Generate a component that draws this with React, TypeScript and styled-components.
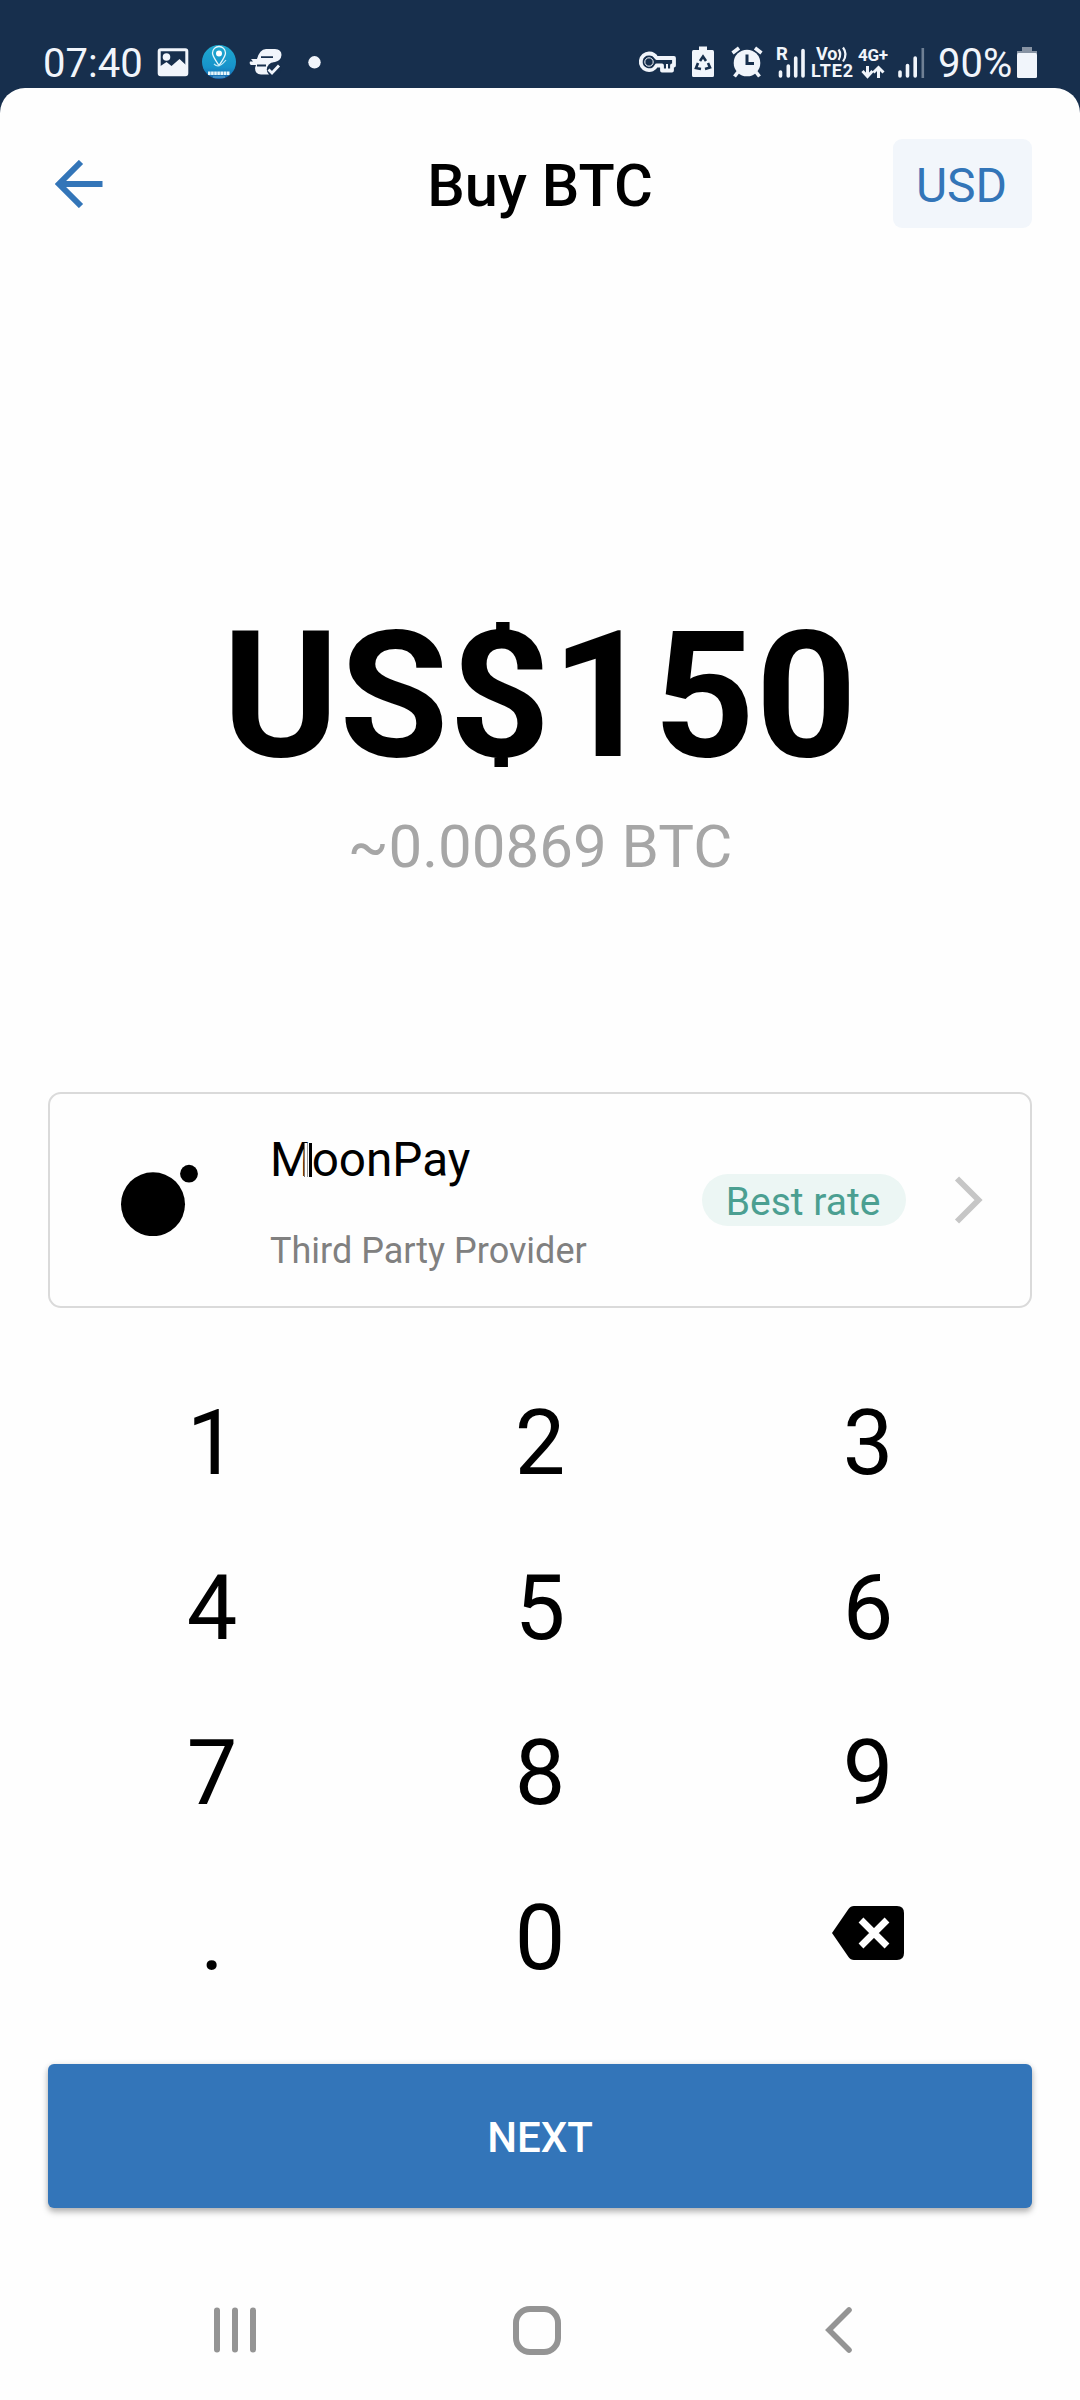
import React from "react";
import styled, { createGlobalStyle } from "styled-components";

const GlobalStyle = createGlobalStyle`
  * { box-sizing: border-box; }
  body { margin: 0; background: #172f4d; }
  button { border: 0; padding: 0; margin: 0; background: none; font: inherit; color: inherit; }
  svg { display: block; flex: none; }
`;

const Screen = styled.div`
  width: 1080px;
  height: 2400px;
  overflow: hidden;
  display: flex;
  flex-direction: column;
  background: #172f4d;
  font-family: Roboto, "Noto Sans", sans-serif;
  color: #000;
`;

const StatusBar = styled.div`
  height: 88px;
  flex: none;
  padding: 40px 43px 8px 42px;
  display: flex;
  justify-content: space-between;
  color: #f1f5fb;
`;

const StatusGroup = styled.div`
  display: flex;
  align-items: flex-start;
`;

const StatusText = styled.span<{ $width: number; $lead: number }>`
  width: ${(p) => p.$width}px;
  padding: 4px 0 0 ${(p) => p.$lead}px;
  font-size: 40px;
  line-height: 40px;
  white-space: nowrap;
`;

const StatusIcon = styled.svg<{ $gap: number }>`
  height: 40px;
  margin-left: ${(p) => p.$gap}px;
  overflow: visible;
`;

const Sheet = styled.main`
  flex: 1;
  display: flex;
  flex-direction: column;
  padding: 51px 48px 0;
  background: #fefefe;
  border-radius: 25px 25px 0 0;
`;

const Header = styled.header`
  height: 89px;
  display: grid;
  grid-template-columns: 139px 1fr 139px;
  align-items: center;
`;

const BackButton = styled.button`
  padding-left: 7px;
  justify-self: start;
`;

const Title = styled.h1`
  margin: 0;
  padding-top: 6px;
  text-align: center;
  font-size: 59.5px;
  line-height: 83px;
  font-weight: 500;
`;

const CurrencyButton = styled.button`
  height: 89px;
  padding: 4px 2px 0 0;
  border-radius: 9px;
  background: #f2f6fb;
  color: #3375b8;
  font-size: 48px;
  line-height: 85px;
`;

const Amount = styled.div`
  margin-top: 368px;
  text-align: center;
  font-size: 177px;
  line-height: 200px;
  font-weight: 700;
  letter-spacing: 0.6px;
  clip-path: inset(26px 0 29px 0);
`;

const Estimate = styled.div`
  margin-top: 11px;
  text-align: center;
  font-size: 60px;
  line-height: 80px;
  color: #a6a6a6;
`;

const ProviderCard = styled.section`
  margin-top: 205px;
  height: 216px;
  padding: 0 47px 0 71px;
  display: flex;
  align-items: center;
  border: 2px solid #dadada;
  border-radius: 13px;
`;

const ProviderInfo = styled.div`
  flex: 1;
  margin-left: 71px;
  padding-top: 11px;
  display: flex;
  flex-direction: column;
  gap: 31px;
`;

const ProviderName = styled.div`
  position: relative;
  font-size: 47.7px;
  line-height: 60px;
`;

const TextCaret = styled.span`
  position: absolute;
  left: 34px;
  top: 13px;
  width: 8px;
  height: 34px;
  background: #fefefe;
  border-left: 1px solid #777;
  border-right: 3px solid #000;
  box-shadow: inset -1px 0 #fff, inset -2px 0 #999;
`;

const ProviderNote = styled.div`
  font-size: 36px;
  line-height: 60px;
  color: #808080;
`;

const RateBadge = styled.span`
  width: 204px;
  height: 52px;
  padding: 4px 2px 0 0;
  border-radius: 26px;
  background: #ecf6f4;
  color: #4b9f91;
  text-align: center;
  font-size: 39px;
  line-height: 49px;
`;

const Chevron = styled.svg`
  margin-left: 47px;
`;

const Keypad = styled.div`
  margin-top: 53px;
  display: grid;
  grid-template-columns: repeat(3, 1fr);
  grid-auto-rows: 165px;
`;

const Key = styled.button`
  display: flex;
  align-items: center;
  justify-content: center;
  font-size: 90px;
  line-height: 165px;
`;

const DeleteKey = styled(Key)`
  padding-bottom: 11px;
`;

const NextButton = styled.button`
  margin-top: 43px;
  height: 144px;
  padding-top: 2px;
  border-radius: 6px;
  background: #3375b9;
  color: #fff;
  font-size: 42px;
  font-weight: 500;
  box-shadow: 0 4px 6px rgba(0, 0, 0, 0.26), 0 1px 6px rgba(0, 0, 0, 0.1);
`;

const NavBar = styled.nav`
  margin-top: 95px;
  height: 54px;
  padding: 0 180px 0 164px;
  display: flex;
  align-items: center;
  justify-content: space-between;
`;

const NavButton = styled.button`
  color: #949494;
`;

const HomeButton = styled(NavButton)`
  padding-right: 9px;
`;

const KEYS = ["1", "2", "3", "4", "5", "6", "7", "8", "9", ".", "0"];

const BackspaceIcon = () => (
  <svg width="72" height="54" viewBox="0 0 72 54">
    <path
      d="M22 0H65Q72 0 72 7V47Q72 54 65 54H22Q18.500 54 16.500 51L0 27L16.500 3Q18.500 0 22 0Z"
      fill="#000"
    />
    <path d="M29 14L55 40M55 14L29 40" stroke="#fff" strokeWidth="6.800" />
  </svg>
);

const LeftStatus = () => (
  <StatusGroup>
    <StatusText $width={100} $lead={1}>07:40</StatusText>
    <StatusIcon $gap={15} width="32" viewBox="0 0 32 40">
      <rect x="2.200" y="9.700" width="27.600" height="25" rx="1.500" fill="none" stroke="currentColor" strokeWidth="3" />
      <circle cx="9.500" cy="17" r="3.800" fill="currentColor" />
      <path d="M2 27L9.500 22L14.500 26L22.500 19L30 26V35H2Z" fill="currentColor" />
    </StatusIcon>
    <StatusIcon $gap={13} width="34" viewBox="0 0 34 40">
      <defs>
        <linearGradient id="app" x1="0" y1="0" x2="0" y2="1">
          <stop offset="0" stopColor="#1fa9cf" />
          <stop offset=".65" stopColor="#1793cb" />
          <stop offset="1" stopColor="#1663ae" />
        </linearGradient>
      </defs>
      <circle cx="17" cy="22" r="17" fill="url(#app)" />
      <path d="M17 25.500C13 19 10.500 16.500 10.500 13A6.500 6.500 0 0 1 23.500 13C23.500 16.500 21 19 17 25.500Z" fill="none" stroke="#e8f7fc" strokeWidth="1.300" />
      <circle cx="17" cy="13.500" r="3" fill="#fff" />
      <path d="M12 24Q17 29 24 20" fill="none" stroke="#bfe8f5" strokeWidth="1.200" />
      <path d="M6 33.300H28" stroke="#e8f7fc" strokeWidth="3.400" strokeDasharray="2.600 .5" />
      <path d="M11 37H23" stroke="#7fc0e0" strokeWidth=".8" />
    </StatusIcon>
    <StatusIcon $gap={13} width="34" viewBox="0 0 34 40">
      <path d="M17 9H26Q32.500 9.500 32.500 15Q32 20.500 26 22L22 24V34.500H12Q6 34 6 28L7 25H2Q0 24 1 21.500H4L2 19H8Q10.500 9.500 17 9Z" fill="currentColor" />
      <path d="M12 17.200H24M8 25.500H17" stroke="#172f4d" strokeWidth="1.800" />
      <circle cx="25" cy="29.500" r="7.200" fill="#172f4d" />
      <path d="M19.500 29.500L23 33L30 25.500" fill="none" stroke="currentColor" strokeWidth="2.800" />
    </StatusIcon>
    <StatusIcon $gap={25} width="13" viewBox="0 0 13 40">
      <circle cx="6.500" cy="22.300" r="6.200" fill="currentColor" />
    </StatusIcon>
  </StatusGroup>
);

const RightStatus = () => (
  <StatusGroup>
    <StatusIcon $gap={0} width="37" viewBox="0 0 37 40">
      <path
        d="M10 13.500A8.300 8.300 0 1 0 17.500 25.500H23V30.500H33V25.500H35V18H17.500A8.300 8.300 0 0 0 10 13.500Z"
        fill="none" stroke="currentColor" strokeWidth="3.800" strokeLinejoin="round"
      />
      <circle cx="10" cy="22" r="4.200" fill="none" stroke="currentColor" strokeWidth="1" />
      <path d="M28 24V30" stroke="currentColor" strokeWidth="2" />
    </StatusIcon>
    <StatusIcon $gap={16} width="22" viewBox="0 0 22 40">
      <path d="M7 6.500H15V10H20.500Q22 10 22 12V35.500Q22 37 20.500 37H1.500Q0 37 0 35.500V12Q0 10 1.500 10H7Z" fill="currentColor" />
      <path d="M8 21L11 16.500L14 21M16 23L18 27.500L13 29M9 29L4 28L6 23" fill="none" stroke="#172f4d" strokeWidth="2.600" />
    </StatusIcon>
    <StatusIcon $gap={17} width="32" viewBox="0 0 32 40">
      <path d="M1.500 13L8 8M30.500 13L24 8M7 32L3.500 36.500M25 32L28.500 36.500" stroke="currentColor" strokeWidth="3.600" />
      <circle cx="16" cy="23" r="13.300" fill="currentColor" />
      <path d="M16 14.500V23.500H23" fill="none" stroke="#172f4d" strokeWidth="3" />
    </StatusIcon>
    <StatusIcon $gap={14} width="28" viewBox="0 0 28 40">
      <text x="-1" y="20" fontSize="18.500" fontWeight="700" fill="currentColor">R</text>
      <path d="M3.500 32V36M11.300 26V36M18.700 18V36M26 10.500V36" stroke="currentColor" strokeWidth="3.600" strokeLinecap="round" />
    </StatusIcon>
    <StatusIcon $gap={6} width="42" viewBox="0 0 42 40">
      <text x="5" y="20" fontSize="18" fontWeight="700" fill="currentColor">Vo</text>
      <path d="M27.500 9.500Q31 14.500 27.500 20M32 7.500Q37 14 32 21.500" fill="none" stroke="currentColor" strokeWidth="2.200" />
      <text x="0" y="37" fontSize="18" fontWeight="700" fill="currentColor" textLength="42">LTE2</text>
    </StatusIcon>
    <StatusIcon $gap={5} width="30" viewBox="0 0 30 40">
      <text x="0" y="20.500" fontSize="17" fontWeight="700" fill="currentColor" textLength="30">4G+</text>
      <path d="M9.500 26V36M4.500 31L9.500 36.500L14.500 31M20.500 38V28M15.500 32.500L20.500 27.500L25.500 32.500" fill="none" stroke="currentColor" strokeWidth="3" />
    </StatusIcon>
    <StatusIcon $gap={10} width="26" viewBox="0 0 26 40">
      <path d="M2 32V36M9.500 25.500V36M17.200 18V36" stroke="currentColor" strokeWidth="3.600" strokeLinecap="round" />
      <path d="M24.800 8V38" stroke="#6f8095" strokeWidth="2.600" />
    </StatusIcon>
    <StatusText $width={93} $lead={14}>90%</StatusText>
    <StatusIcon $gap={0} width="20" viewBox="0 0 20 40">
      <path d="M5 7H15V11H20V14H0V11H5Z" fill="#8793a3" />
      <rect y="13" width="20" height="25" rx="1.500" fill="currentColor" />
    </StatusIcon>
  </StatusGroup>
);

export default function App() {
  return (
    <>
      <GlobalStyle />
      <Screen>
        <StatusBar>
          <LeftStatus />
          <RightStatus />
        </StatusBar>
        <Sheet>
          <Header>
            <BackButton aria-label="Back">
              <svg width="48" height="48" viewBox="0 0 48 48">
                <path d="M26 2L4 24L26 46M4 24H47.500" fill="none" stroke="#3375b8" strokeWidth="6" />
              </svg>
            </BackButton>
            <Title>Buy BTC</Title>
            <CurrencyButton>USD</CurrencyButton>
          </Header>
          <Amount>US$150</Amount>
          <Estimate>~0.00869 BTC</Estimate>
          <ProviderCard>
            <svg width="78" height="72" viewBox="0 0 78 72">
              <circle cx="32" cy="40.200" r="32" />
              <circle cx="68" cy="9.700" r="8.900" />
            </svg>
            <ProviderInfo>
              <ProviderName>
                MoonPay
                <TextCaret />
              </ProviderName>
              <ProviderNote>Third Party Provider</ProviderNote>
            </ProviderInfo>
            <RateBadge>Best rate</RateBadge>
            <Chevron width="30" height="48" viewBox="0 0 30 48">
              <path d="M4 2.500L25.500 24L4 45.500" fill="none" stroke="#c6c6c6" strokeWidth="5.800" />
            </Chevron>
          </ProviderCard>
          <Keypad>
            {KEYS.map((k) => (
              <Key key={k}>{k}</Key>
            ))}
            <DeleteKey aria-label="Delete">
              <BackspaceIcon />
            </DeleteKey>
          </Keypad>
          <NextButton>NEXT</NextButton>
          <NavBar>
            <NavButton aria-label="Recent apps">
              <svg width="46" height="46" viewBox="0 0 46 46">
                <path d="M5 3.500V42.500M23 3.500V42.500M41 3.500V42.500" stroke="currentColor" strokeWidth="6" strokeLinecap="round" />
              </svg>
            </NavButton>
            <HomeButton aria-label="Home">
              <svg width="48" height="49" viewBox="0 0 48 49">
                <rect x="3" y="3" width="42" height="43" rx="14" fill="none" stroke="currentColor" strokeWidth="6" />
              </svg>
            </HomeButton>
            <NavButton aria-label="Navigate back">
              <svg width="27" height="46" viewBox="0 0 27 46">
                <path d="M24 3L4 23L24 43" fill="none" stroke="currentColor" strokeWidth="5.600" strokeLinecap="round" />
              </svg>
            </NavButton>
          </NavBar>
        </Sheet>
      </Screen>
    </>
  );
}
